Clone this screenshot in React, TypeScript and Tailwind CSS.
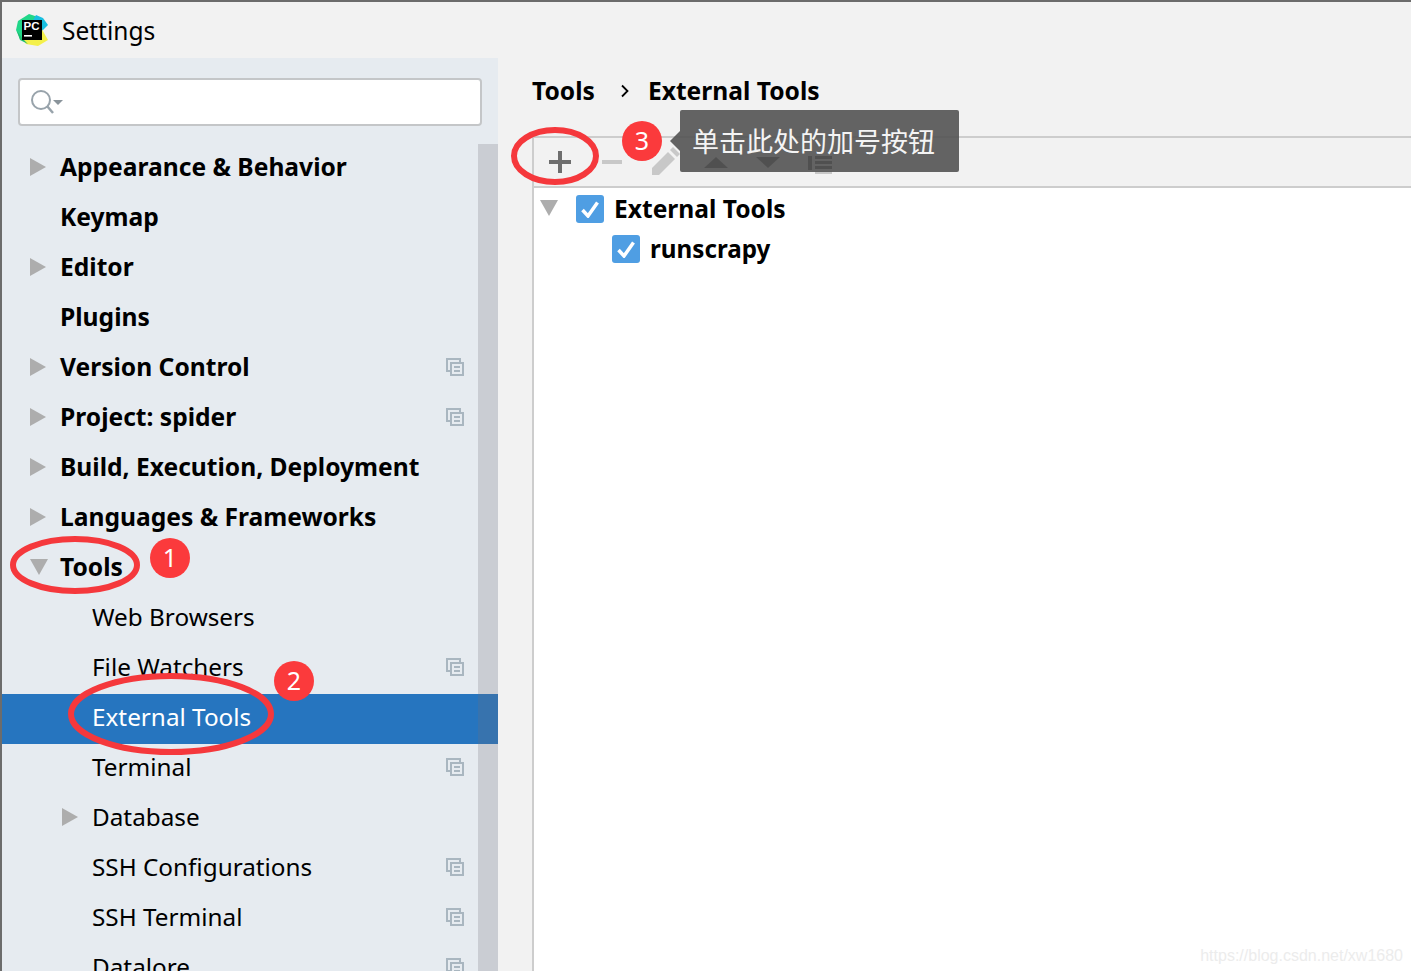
import React from 'react';

interface NavItem {
  label: string;
  level: 0 | 1;
  arrow?: 'right' | 'down';
  project?: boolean;
  selected?: boolean;
}

const items: NavItem[] = [
  { label: 'Appearance & Behavior', level: 0, arrow: 'right' },
  { label: 'Keymap', level: 0 },
  { label: 'Editor', level: 0, arrow: 'right' },
  { label: 'Plugins', level: 0 },
  { label: 'Version Control', level: 0, arrow: 'right', project: true },
  { label: 'Project: spider', level: 0, arrow: 'right', project: true },
  { label: 'Build, Execution, Deployment', level: 0, arrow: 'right' },
  { label: 'Languages & Frameworks', level: 0, arrow: 'right' },
  { label: 'Tools', level: 0, arrow: 'down' },
  { label: 'Web Browsers', level: 1 },
  { label: 'File Watchers', level: 1, project: true },
  { label: 'External Tools', level: 1, selected: true },
  { label: 'Terminal', level: 1, project: true },
  { label: 'Database', level: 1, arrow: 'right' },
  { label: 'SSH Configurations', level: 1, project: true },
  { label: 'SSH Terminal', level: 1, project: true },
  { label: 'Datalore', level: 1, project: true },
];

const Arrow = ({ dir }: { dir: 'right' | 'down' }) =>
  dir === 'right' ? (
    <svg width="16" height="18" viewBox="0 0 16 18" className="shrink-0">
      <path d="M0 0L16 9L0 18Z" fill="#adadad" />
    </svg>
  ) : (
    <svg width="18" height="16" viewBox="0 0 18 16" className="shrink-0">
      <path d="M0 0H18L9 16Z" fill="#adadad" />
    </svg>
  );

const ProjectIcon = () => (
  <svg width="18" height="18" viewBox="0 0 18 18" fill="none" stroke="#a9b6c0" strokeWidth="2" className="shrink-0">
    <path d="M4 13H1V1H14V5" />
    <rect x="5" y="5" width="12" height="12" />
    <path d="M8 9H14M8 13H14" />
  </svg>
);

const Check = () => (
  <div className="flex h-[28px] w-[28px] shrink-0 items-center justify-center rounded-[3px] bg-[#4f9ee3]">
    <svg width="18" height="17" viewBox="0 0 18 17" fill="none" stroke="#ffffff" strokeWidth="3.5">
      <path d="M1.5 9L7 15L16.5 1.5" />
    </svg>
  </div>
);

const Logo = () => (
  <svg width="32" height="32" viewBox="0 0 32 32" className="shrink-0">
    <path d="M2 7L13 0L22 3L20 18L4 25L0 16Z" fill="#21d789" />
    <path d="M20 1L27 4L32 11L26 17L16 8Z" fill="#19bfe0" />
    <path d="M24 12L32 26L22 32L10 30L6 24Z" fill="#f4f04a" />
    <path d="M1 17L6 24L12 30L4 26Z" fill="#1dbb6c" />
    <rect x="6" y="6" width="20" height="20" fill="#000000" />
    <text x="7.5" y="16" fill="#ffffff" fontSize="11.5" fontWeight="700" fontFamily="'Liberation Sans', sans-serif">PC</text>
    <rect x="8" y="21" width="8" height="1.6" fill="#ffffff" />
  </svg>
);

const Ellipse = ({ className, cx, cy, rx, ry, w, h }: { className: string; cx: number; cy: number; rx: number; ry: number; w: number; h: number }) => (
  <svg width={w} height={h} className={className}>
    <ellipse cx={cx} cy={cy} rx={rx} ry={ry} fill="none" stroke="#f5383c" strokeWidth="6" />
  </svg>
);

const Badge = ({ n, className }: { n: number; className: string }) => (
  <div className={`absolute flex h-[40px] w-[40px] items-center justify-center rounded-full bg-[#fb3a3c] pb-[2px] text-[25px] leading-none text-white ${className}`}>
    {n}
  </div>
);

export default function App() {
  return (
    <div className="relative flex h-[971px] w-[1411px] flex-col overflow-hidden border-l-2 border-t-2 border-[#6c6c6c] bg-[#f2f2f2] font-['Noto_Sans','Noto_Sans_CJK_SC',sans-serif] text-black">
      <div className="flex h-[56px] shrink-0 items-center gap-[14px] pl-[14px]">
        <Logo />
        <span className="mt-[2px] text-[24.5px] leading-none">Settings</span>
      </div>

      <div className="flex min-h-0 flex-1">
        <aside className="flex w-[496px] shrink-0 flex-col bg-[#e6ebf0]">
          <div className="shrink-0 pl-[16px] pr-[16px] pt-[20px]">
            <div className="flex h-[48px] items-center rounded-[4px] border-2 border-[#c4c6c8] bg-white pl-[10px]">
              <svg width="34" height="28" viewBox="0 0 34 28" fill="none" className="shrink-0">
                <circle cx="11" cy="12" r="9" stroke="#98a3ab" strokeWidth="2" />
                <path d="M17 18L23 25" stroke="#98a3ab" strokeWidth="2.5" />
                <path d="M23 12H33L28 17Z" fill="#8a949b" />
              </svg>
            </div>
          </div>
          <div className="relative mt-[18px] min-h-0 flex-1">
            <nav>
              {items.map((it) => (
                <div
                  key={it.label}
                  className={`flex h-[50px] items-center pr-[34px] ${it.selected ? 'bg-[#2675bf] text-white' : ''}`}
                >
                  <div className={`mb-[5px] flex w-[58px] shrink-0 items-center ${it.level === 1 ? 'ml-[32px]' : ''}`}>
                    <div className="ml-[28px] flex w-[30px]">{it.arrow && <Arrow dir={it.arrow} />}</div>
                  </div>
                  <span className={`mb-[4px] leading-none ${it.level === 0 ? 'text-[24.6px] font-bold' : 'text-[24.3px]'}`}>{it.label}</span>
                  {it.project && (
                    <span className="mb-[4px] ml-auto">
                      <ProjectIcon />
                    </span>
                  )}
                </div>
              ))}
            </nav>
            <div className="absolute bottom-0 right-0 top-0 w-[20px] bg-[#6f6f75]/[0.234]" />
          </div>
        </aside>

        <main className="flex min-w-0 flex-1 flex-col">
          <div className="flex h-[78px] shrink-0 items-center pb-[12px] pl-[34px] text-[24.6px] font-bold leading-none">
            <span>Tools</span>
            <svg width="10" height="14" viewBox="0 0 10 14" fill="none" stroke="#000000" strokeWidth="1.8" className="ml-[25px] mr-[18px]">
              <path d="M2 1.5L7.5 7L2 12.5" />
            </svg>
            <span>External Tools</span>
          </div>
          <div className="ml-[34px] flex min-h-0 flex-1 flex-col border-l-2 border-t-2 border-[#cdcdcd]">
            <div className="flex h-[50px] shrink-0 items-center border-b-2 border-[#cdcdcd]">
              <svg width="22" height="22" viewBox="0 0 22 22" className="ml-[15px] shrink-0" fill="#6e6e6e">
                <rect x="9" y="0" width="4" height="22" />
                <rect x="0" y="9" width="22" height="4" />
              </svg>
              <div className="ml-[31px] h-[4px] w-[20px] shrink-0 bg-[#c8c8c8]" />
              <svg width="28" height="28" viewBox="0 0 28 28" className="mb-[3px] ml-[30px] shrink-0" fill="#c8c8c8">
                <path d="M0 21L16 5L23 12L7 28H0Z" />
                <path d="M18 3L21 0L28 7L25 10Z" />
              </svg>
              <svg width="24" height="11" viewBox="0 0 24 11" className="ml-[24px] shrink-0" fill="#3a3a3a">
                <path d="M12 0L24 11H0Z" />
              </svg>
              <svg width="24" height="11" viewBox="0 0 24 11" className="ml-[28px] shrink-0" fill="#3a3a3a">
                <path d="M0 0H24L12 11Z" />
              </svg>
              <svg width="24" height="18" viewBox="0 0 24 18" className="ml-[28px] mt-[6px] shrink-0" fill="#3a3a3a">
                <rect x="0" y="0" width="4" height="14" />
                <rect x="7" y="0" width="17" height="3" />
                <rect x="7" y="5" width="17" height="3" />
                <rect x="7" y="10" width="17" height="3" />
                <rect x="7" y="15" width="17" height="3" fill="#c8c8c8" />
              </svg>
            </div>
            <div className="relative flex-1 bg-white text-[24.6px] font-bold leading-none">
              <div className="flex h-[40px] items-center pl-[6px] pt-[2px]">
                <div className="mb-[2px] w-[36px]">
                  <Arrow dir="down" />
                </div>
                <Check />
                <span className="ml-[10px]">External Tools</span>
              </div>
              <div className="flex h-[40px] items-center pl-[78px] pt-[2px]">
                <Check />
                <span className="ml-[10px] mt-[1px] text-[24.2px]">runscrapy</span>
              </div>
              <span className="absolute bottom-[7px] right-[8px] font-['Liberation_Sans',sans-serif] text-[16px] font-normal text-[#ececec]">
                https://blog.csdn.net/xw1680
              </span>
            </div>
          </div>
        </main>
      </div>

      <Ellipse className="absolute left-[6px] top-[532px]" cx={67} cy={31} rx={62} ry={26} w={140} h={64} />
      <Ellipse className="absolute left-[64px] top-[670px]" cx={105} cy={42} rx={100} ry={38} w={212} h={84} />
      <Ellipse className="absolute left-[508px] top-[124px]" cx={45} cy={30} rx={41} ry={26} w={94} h={64} />
      <Badge n={1} className="left-[148px] top-[536px]" />
      <Badge n={2} className="left-[272px] top-[659px]" />
      <Badge n={3} className="left-[620px] top-[119px]" />

      <div className="absolute left-[678px] top-[108px] flex h-[62px] w-[279px] items-center rounded-[2px] bg-[#535353]/90 pl-[12px] text-[27px] leading-none text-[#f4f4f4]">
        <div className="absolute left-[-10px] top-[21px] h-0 w-0 border-y-[10px] border-r-[10px] border-y-transparent border-r-[#535353]/90" />
        单击此处的加号按钮
      </div>
    </div>
  );
}
